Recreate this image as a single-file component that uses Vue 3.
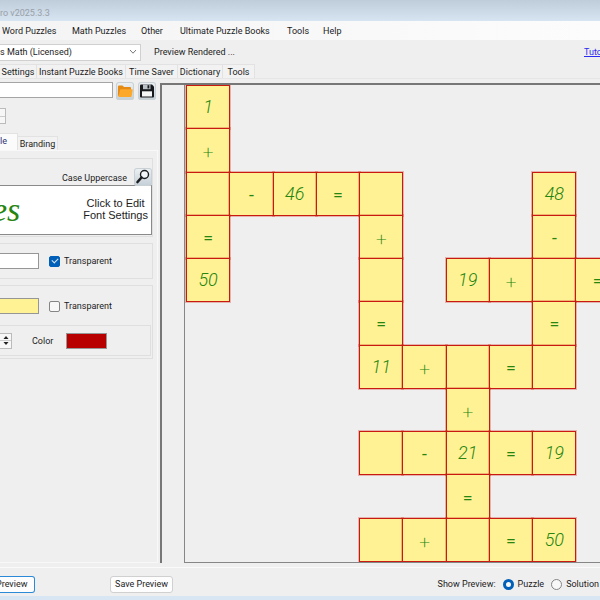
<script setup>
import { ref } from 'vue'

const menus = ['Word Puzzles', 'Math Puzzles', 'Other', 'Ultimate Puzzle Books', 'Tools', 'Help']
const tabs = ['Settings', 'Instant Puzzle Books', 'Time Saver', 'Dictionary', 'Tools']

// One character group per cell; "." is outside the puzzle, "_" is an empty cell.
const rows = [
  '1 . . . . . . . . . .',
  '+ . . . . . . . . . .',
  '_ - 46 = _ . . . 48 . .',
  '= . . . + . . . - . .',
  '50 . . . _ . 19 + _ = _',
  '. . . . = . . . = . .',
  '. . . . 11 + _ = _ . .',
  '. . . . . . + . . . .',
  '. . . . _ - 21 = 19 . .',
  '. . . . . . = . . . .',
  '. . . . _ + _ = 50 . .'
]
const cells = rows.flatMap((row) =>
  row.split(' ').map((v) => ({
    filled: v !== '.',
    text: v === '_' || v === '.' ? '' : v,
    op: '+-='.includes(v),
    plus: v === '+'
  }))
)

const preview = ref('puzzle')
const backTransparent = ref(true)
const cellTransparent = ref(false)
</script>

<template>
  <div class="window">
    <header class="titlebar">ro v2025.3.3</header>
    <nav class="menubar">
      <button v-for="m in menus" :key="m" type="button">{{ m }}</button>
    </nav>
    <div class="toolbar">
      <div class="picker">
        <select aria-label="Puzzle type">
          <option>s Math (Licensed)</option>
        </select>
        <svg width="8" height="6" viewBox="0 0 8 6"><path d="M1 1l3 3.2L7 1" fill="none" stroke="#777" /></svg>
      </div>
      <span class="state">Preview Rendered ...</span>
      <a href="#tutorials">Tutorials</a>
    </div>
    <div class="tabs">
      <button v-for="t in tabs" :key="t" type="button">{{ t }}</button>
    </div>

    <main class="body">
      <aside class="side">
        <div class="file-row">
          <input class="path" type="text" aria-label="File" />
          <button type="button" class="icon" aria-label="Open">
            <svg width="18" height="18" viewBox="0 0 18 18">
              <path d="M2 14V4.500q0-1 1-1h3.500l1.500 1.500H14q1 0 1 1v2z" fill="#e58a14" />
              <path d="M2.500 15L4 8q.3-.8 1-.8h11q.8 0 .7.800L15.700 14q-.2 1-1 1z" fill="#fba82b" />
            </svg>
          </button>
          <button type="button" class="icon" aria-label="Save">
            <svg width="18" height="18" viewBox="0 0 18 18">
              <path d="M2 3.500q0-1 1-1h11L16 4.500V14.500q0 1-1 1H3q-1 0-1-1z" fill="#17191c" />
              <path d="M5 2.500h7.500v4.700H5z" fill="#b9c1c6" />
              <path d="M9.500 3.200h1.800v3.200H9.500z" fill="#17191c" />
              <path d="M4 9.300h10v5.200H4z" fill="#f4f6f7" />
            </svg>
          </button>
        </div>
        <div class="spin spin-edge">
          <button type="button" aria-label="Increase size"></button>
          <button type="button" aria-label="Decrease size"></button>
        </div>
        <div class="subtabs">
          <button type="button" class="active">le</button>
          <button type="button">Branding</button>
        </div>
        <div class="sheet">
          <section class="group font-group">
            <div class="case-row">
              <span>Case Uppercase</span>
              <button type="button" class="icon" aria-label="Find font">
                <svg width="18" height="18" viewBox="0 0 18 18">
                  <circle cx="10.500" cy="6.500" r="4" fill="#f3f6f8" stroke="#1b1d1f" stroke-width="1.400" />
                  <path d="M7.500 9.500l-4 4.500" stroke="#1b1d1f" stroke-width="2.600" stroke-linecap="round" />
                </svg>
              </button>
            </div>
            <button type="button" class="font-box">
              <span class="script">es</span>
              <span class="hint">Click to Edit<br />Font Settings</span>
            </button>
          </section>
          <section class="group back-group">
            <button type="button" class="swatch white" aria-label="Background color"></button>
            <label><input v-model="backTransparent" type="checkbox" />Transparent</label>
          </section>
          <section class="group cell-group">
            <div class="cell-row">
              <button type="button" class="swatch yellow" aria-label="Cell color"></button>
              <label><input v-model="cellTransparent" type="checkbox" />Transparent</label>
            </div>
            <div class="group line-group">
              <div class="spin">
                <button type="button" aria-label="Thicker line"><svg width="6" height="4" viewBox="0 0 6 4"><path d="M0.500 4l2.500-3 2.500 3z" fill="#222" /></svg></button>
                <button type="button" aria-label="Thinner line"><svg width="6" height="4" viewBox="0 0 6 4"><path d="M0.500 0l2.500 3 2.500-3z" fill="#222" /></svg></button>
              </div>
              <span>Color</span>
              <button type="button" class="swatch red" aria-label="Line color"></button>
            </div>
          </section>
        </div>
      </aside>

      <section class="canvas">
        <div class="page">
          <div class="puzzle">
            <div v-for="(c, i) in cells" :key="i" :class="{ cell: c.filled, op: c.op, plus: c.plus }">{{ c.text }}</div>
          </div>
        </div>
      </section>
    </main>

    <footer class="actions">
      <button type="button" class="btn primary">Preview</button>
      <button type="button" class="btn save">Save Preview</button>
      <div class="choice">
        <span>Show Preview:</span>
        <label><input v-model="preview" type="radio" name="preview" value="puzzle" />Puzzle</label>
        <label><input v-model="preview" type="radio" name="preview" value="solution" />Solution</label>
      </div>
    </footer>
    <div class="strip"></div>
  </div>
</template>

<style>
body {
  background: #efefef;
}
</style>

<style scoped>
* {
  box-sizing: border-box;
}
.window {
  display: flex;
  flex-direction: column;
  min-height: 100vh;
  overflow: hidden;
  background: #efefef;
  color: #1c1c1c;
  font: 9px/12px Roboto, "Liberation Sans", sans-serif;
  white-space: nowrap;
}
button,
input,
select {
  margin: 0;
  padding: 0;
  border: 0;
  background: none;
  color: inherit;
  font: inherit;
}
svg {
  display: block;
}
.titlebar {
  height: 21px;
  padding-top: 7px;
  background: linear-gradient(#bfccda, #d7e4f1);
  color: #98a0a8;
}
.menubar {
  display: grid;
  grid-template-columns: 70px 69px 39px 107px 36px auto;
  justify-content: start;
  height: 19px;
  padding-left: 2px;
  background: linear-gradient(90deg, #f4f4f4, #fcfcfc);
}
.menubar button {
  text-align: left;
}
.toolbar {
  display: flex;
  align-items: center;
  height: 24px;
}
.picker {
  display: flex;
  align-items: center;
  width: 141px;
  height: 17px;
  padding-right: 3px;
  border: 1px solid #d0d0d0;
  border-left: 0;
  background: #fff;
}
.picker select {
  flex: 1;
  appearance: none;
}
.state {
  margin-left: 13px;
}
.toolbar a {
  width: 16px;
  margin-left: auto;
  overflow: hidden;
  color: #2b2bf0;
}
.tabs {
  display: grid;
  grid-template-columns: 37px 89px 52px 45px 32px;
  height: 15px;
  border-bottom: 1px solid #e6e6e6;
}
.tabs button {
  border: 1px solid #e2e2e2;
  border-width: 1px 1px 0 0;
  background: #f2f2f2;
}
.body {
  display: flex;
  padding-top: 3px;
}
.side {
  display: flex;
  flex-direction: column;
  width: 160px;
  flex: none;
}
.file-row {
  display: flex;
  align-items: flex-start;
  gap: 4px;
  padding-right: 4px;
}
.path {
  flex: 1;
  min-width: 0;
  height: 16px;
  margin-right: -1px;
  border: 1px solid #a5a5a5;
  border-left: 0;
  background: #fff;
}
.icon {
  width: 18px;
  height: 18px;
  border-radius: 3px;
  background: linear-gradient(#eef2f4, #c3ced6);
  box-shadow: inset 0 0 0 1px #c9d1d6;
}
.spin {
  display: flex;
  flex-direction: column;
  width: 12px;
  height: 16px;
  border: 1px solid #bbb;
  border-left: 0;
  background: #f7f7f7;
}
.spin button {
  display: grid;
  place-items: center;
  flex: 1;
}
.spin button + button {
  border-top: 1px solid #ccc;
}
.spin-edge {
  width: 6px;
  margin: 8px 0 9px;
}
.subtabs {
  display: flex;
  align-items: flex-end;
  height: 17px;
}
.subtabs button {
  width: 40px;
  height: 14px;
  border: 1px solid #e2e2e2;
  border-width: 1px 1px 0 0;
  background: #f2f2f2;
}
.subtabs .active {
  width: 18px;
  height: 17px;
  padding-bottom: 2px;
  background: #fbfbfb;
  color: #27337a;
  text-align: left;
}
.sheet {
  display: flex;
  flex-direction: column;
  flex: 1;
  gap: 6px;
  margin-right: 2px;
  padding: 7px 4px 0 0;
  border: 1px solid #f8f8f8;
  border-left: 0;
}
.group {
  border: 1px solid #dfdfdf;
  border-left: 0;
}
.font-group {
  height: 79px;
  padding-top: 9px;
}
.case-row {
  display: flex;
  justify-content: flex-end;
  align-items: center;
  gap: 7px;
  height: 17px;
}
.case-row span {
  padding-top: 2px;
}
.font-box {
  display: flex;
  justify-content: space-between;
  width: 100%;
  height: 50px;
  padding-right: 3px;
  border: 1px solid #8a8a8a;
  border-left: 0;
  background: #fff;
}
.script {
  align-self: center;
  margin-left: -8px;
  color: #26850f;
  font: italic 34px/34px "Liberation Serif", serif;
}
.hint {
  margin-top: 11px;
  align-self: flex-start;
  font: 11px/12px "Liberation Sans", sans-serif;
}
.back-group {
  display: flex;
  align-items: center;
  height: 36px;
}
.swatch {
  width: 41px;
  height: 16px;
  border: 1px solid #969696;
}
.white,
.yellow {
  width: 39px;
  margin-right: 10px;
  border-left: 0;
}
.white {
  background: #fff;
}
.yellow {
  background: #fff295;
}
.red {
  background: #b80000;
}
label {
  display: flex;
  align-items: center;
  gap: 4px;
}
input[type="checkbox"],
input[type="radio"] {
  appearance: none;
  width: 11px;
  height: 11px;
  border: 1px solid #858585;
  border-radius: 2px;
  background: #f8f8f8;
}
input[type="checkbox"]:checked {
  display: grid;
  place-items: center;
  border-color: #005fb8;
  background: #005fb8;
}
input[type="checkbox"]:checked::after {
  width: 5px;
  height: 3px;
  margin-top: -2px;
  border: solid #d7e8f7;
  border-width: 0 0 1px 1px;
  content: "";
  transform: rotate(-45deg);
}
input[type="radio"] {
  border-radius: 50%;
}
input[type="radio"]:checked {
  border: 3px solid #005fb8;
}
.cell-group {
  height: 74px;
  padding: 12px 0 0;
}
.cell-row {
  display: flex;
  align-items: center;
}
.line-group {
  display: flex;
  align-items: center;
  height: 31px;
  margin-top: 11px;
  margin-right: 1px;
}
.line-group span {
  width: 34px;
  margin-left: 20px;
}
.canvas {
  flex: 1;
  min-width: 0;
  padding-left: 22px;
  margin-top: 1px;
  border: solid #777;
  border-width: 2px 0 0 2px;
}
.page {
  overflow: hidden;
  padding-bottom: 1px;
  padding-left: 2px;
  border: solid #868686;
  border-width: 0 0 1px 1px;
}
.puzzle {
  display: grid;
  grid-template: repeat(11, 1fr) / repeat(11, 1fr);
  width: 476px;
  height: 476px;
}
.cell {
  display: grid;
  place-items: center;
  margin: 0 0 -1px -1px;
  border: 1px solid #c81a10;
  background: #fff295;
  box-shadow: 0 0 0 1px rgba(205, 40, 20, 0.3);
  color: #26850f;
  font: italic 300 18px/20px Roboto, sans-serif;
}
.op {
  padding-top: 2px;
  font: 400 17px/20px Lato, sans-serif;
}
.plus {
  font-weight: 300;
  font-size: 20px;
}
.actions {
  display: flex;
  align-items: center;
  height: 29px;
  margin-top: 4px;
  padding: 4px 1px 0 0;
  border-top: 1px solid #fafafa;
}
.btn {
  height: 17px;
  border: 1px solid #d0d0d0;
  border-radius: 3px;
  background: #fdfdfd;
}
.primary {
  width: 35px;
  border-color: #2b8ad8;
  border-left: 0;
  border-radius: 0 3px 3px 0;
  text-indent: -4px;
  text-align: left;
}
.save {
  width: 63px;
  margin-left: 75px;
}
.choice {
  display: flex;
  gap: 7px;
  margin-left: auto;
}
.strip {
  flex: 1;
  min-height: 3px;
  background: #d8e5f2;
}
</style>
